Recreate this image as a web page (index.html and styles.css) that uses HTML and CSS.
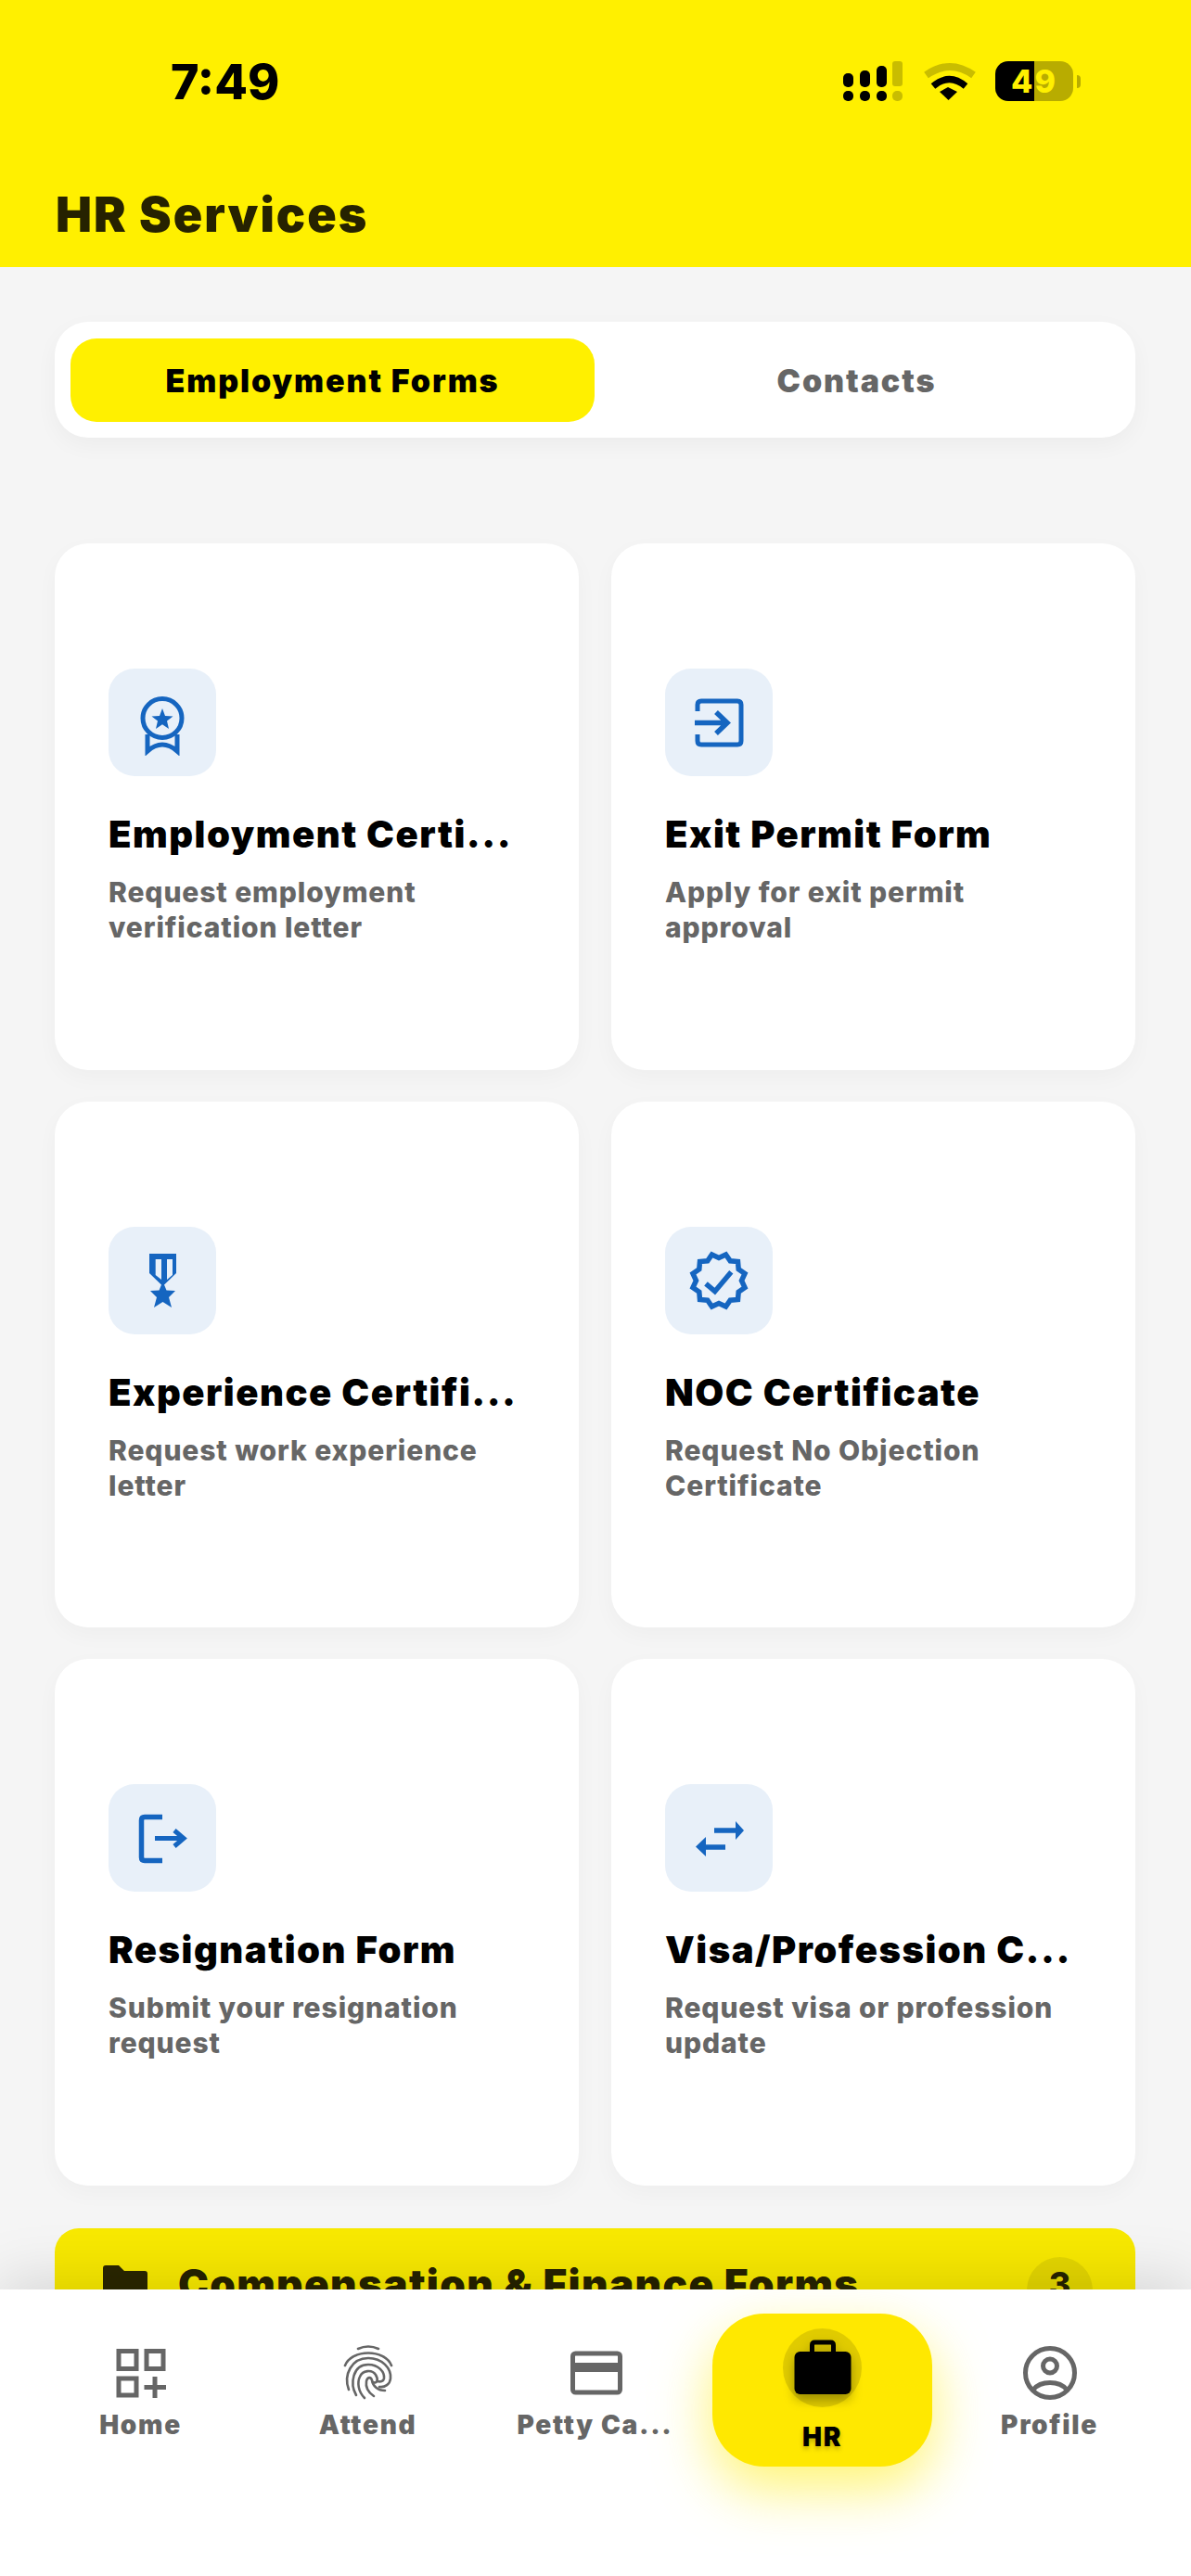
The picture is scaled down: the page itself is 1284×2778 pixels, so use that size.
FILE: index.html
```html
<!DOCTYPE html>
<html lang="en">
<head>
    <meta charset="UTF-8">
    <meta name="viewport" content="width=device-width, initial-scale=1.0">
    <title>HR Services</title>
    <link rel="stylesheet" href="styles.css">
</head>
<body>
    <div class="page">
        <header class="header">
            <div class="status">
                <span class="time">7:49</span>
                <div class="status-icons">
                    <svg class="signal" width="64" height="43" viewBox="0 0 64 43">
                        <g fill="#000">
                            <rect x="0" y="13" width="11" height="15" rx="5"/>
                            <rect x="18" y="10" width="11" height="18" rx="5"/>
                            <rect x="36" y="5" width="11" height="23" rx="5"/>
                            <rect x="0" y="32" width="11" height="11" rx="5"/>
                            <rect x="18" y="32" width="11" height="11" rx="5"/>
                            <rect x="36" y="32" width="11" height="11" rx="5"/>
                        </g>
                        <g fill="#C9BD00">
                            <rect x="53" y="0" width="11" height="27" rx="3"/>
                            <rect x="53" y="32" width="11" height="11" rx="5"/>
                        </g>
                    </svg>
                    <svg class="wifi" width="58" height="43" viewBox="0 0 58 43">
                        <path d="M3.5 15 Q29 -3 54.5 15" fill="none" stroke="#C9BD00" stroke-width="8"/>
                        <path d="M11 27 Q28.5 12 46 27" fill="none" stroke="#000" stroke-width="7"/>
                        <path d="M18 33 L27 28 L37 33 L27.500 42 Z" fill="#000"/>
                    </svg>
                    <div class="battery">
                        <div class="battery-body">49</div>
                        <span class="battery-nub"></span>
                    </div>
                </div>
            </div>
            <h1>HR Services</h1>
        </header>

        <main class="content">
            <div class="tabs">
                <button class="tab active">Employment Forms</button>
                <button class="tab">Contacts</button>
            </div>

            <div class="cards">
                <div class="card">
                    <div class="card-icon">
                        <svg width="72" height="72" viewBox="0 0 72 72">
                            <circle cx="36" cy="31.500" r="21" fill="none" stroke="#1565C0" stroke-width="5"/>
                            <path d="M36 21 L39 29 L47.500 29.500 L41 34.500 L43 43 L36 38.300 L29 43 L31 34.500 L24.500 29.500 L33 29 Z" fill="#1565C0"/>
                            <path d="M20 49 V67 Q28 60 36 60 Q44 60 52 67 V49" fill="none" stroke="#1565C0" stroke-width="5"/>
                        </svg>
                    </div>
                    <h2>Employment Certi...</h2>
                    <p>Request employment verification letter</p>
                </div>
                <div class="card">
                    <div class="card-icon">
                        <svg width="72" height="72" viewBox="0 0 72 72">
                            <path d="M13 24 V17 Q13 13 17 13 H56 Q60 13 60 17 V56 Q60 60 56 60 H17 Q13 60 13 56 V49" fill="none" stroke="#1565C0" stroke-width="5"/>
                            <path d="M10 36.500 H44 M33 25 L45 36.500 L33 48" fill="none" stroke="#1565C0" stroke-width="5.500"/>
                        </svg>
                    </div>
                    <h2>Exit Permit Form</h2>
                    <p>Apply for exit permit approval</p>
                </div>
                <div class="card">
                    <div class="card-icon">
                        <svg width="72" height="72" viewBox="0 0 72 72">
                            <path fill-rule="evenodd" fill="#1565C0" d="M22 7 H51 V28 L36.500 42 L22 28 Z M28.700 13 V30 L35 35 V13 Z M41 13 V35 L47 30 V13 Z"/>
                            <path fill="#1565C0" d="M36.500 37 L40.500 46.500 L50 47 L43 54 L46 65 L36.500 59 L27 65 L30 54 L23 47 L32.500 46.500 Z"/>
                        </svg>
                    </div>
                    <h2>Experience Certifi...</h2>
                    <p>Request work experience letter</p>
                </div>
                <div class="card">
                    <div class="card-icon">
                        <svg width="72" height="72" viewBox="0 0 72 72">
                            <path d="M60.500 36 L64 43.500 L57.200 48.250 L56.500 56.500 L48.250 57.200 L43.500 64 L36 60.500 L28.500 64 L23.750 57.200 L15.500 56.500 L14.800 48.250 L8 43.500 L11.500 36 L8 28.500 L14.800 23.750 L15.500 15.500 L23.750 14.800 L28.500 8 L36 11.500 L43.500 8 L48.250 14.800 L56.500 15.500 L57.200 23.750 L64 28.500 Z" fill="none" stroke="#1565C0" stroke-width="5.500" stroke-linejoin="miter"/>
                            <path d="M22 39.300 L31.700 47.700 L49.300 26.700" fill="none" stroke="#1565C0" stroke-width="5.500"/>
                        </svg>
                    </div>
                    <h2>NOC Certificate</h2>
                    <p>Request No Objection Certificate</p>
                </div>
                <div class="card">
                    <div class="card-icon">
                        <svg width="72" height="72" viewBox="0 0 72 72">
                            <path d="M36 13.500 H17 Q13.500 13.500 13.500 17 V57 Q13.500 60.500 17 60.500 H36" fill="none" stroke="#1565C0" stroke-width="5.500"/>
                            <path d="M28 36.500 H59 M49 28 L59 36.500 L49 45" fill="none" stroke="#1565C0" stroke-width="5"/>
                        </svg>
                    </div>
                    <h2>Resignation Form</h2>
                    <p>Submit your resignation request</p>
                </div>
                <div class="card">
                    <div class="card-icon">
                        <svg width="72" height="72" viewBox="0 0 72 72">
                            <path d="M31 28 H56 M43 46 H20" fill="none" stroke="#1565C0" stroke-width="5.500"/>
                            <path d="M54 18 L63 28 L54 38 Z M22 35 L11 45.500 L22 56 Z" fill="#1565C0"/>
                        </svg>
                    </div>
                    <h2>Visa/Profession C...</h2>
                    <p>Request visa or profession update</p>
                </div>
            </div>

            <section class="group">
                <svg class="folder" width="48" height="40" viewBox="0 0 48 40">
                    <path d="M0 3 Q0 0 3 0 H17 L23 6 H45 Q48 6 48 9 V37 Q48 40 45 40 H3 Q0 40 0 37 Z" fill="#2A2600"/>
                </svg>
                <h3>Compensation &amp; Finance Forms</h3>
                <span class="count">3</span>
            </section>
        </main>

        <nav class="nav">
            <div class="nav-item">
                <svg width="64" height="64" viewBox="0 0 64 64" fill="none" stroke="#666" stroke-width="5">
                    <rect x="8" y="8.500" width="19" height="19"/>
                    <rect x="38" y="8.500" width="18" height="19"/>
                    <rect x="8" y="38" width="19" height="18"/>
                    <path d="M47 36 V59 M35.500 47.500 H59"/>
                </svg>
                <span>Home</span>
            </div>
            <div class="nav-item">
                <svg width="64" height="64" viewBox="0 0 64 64" fill="none" stroke="#666" stroke-width="2.600" stroke-linecap="round">
                    <path d="M21 6 Q32 1 43 6"/>
                    <path d="M7 24 C14 6 50 6 57 24"/>
                    <path d="M11 50 C5 34 14 16 32 16 C47 16 57 27 56 38 C55.500 44 50 48 44 47"/>
                    <path d="M19 56 C12 44 15 23 32 23 C43 23 50 31 49 38 C48.500 41 45 42 42 41"/>
                    <path d="M28 59 C21 52 20 42 23 36 C26 29 36 28 40 34 C43 39 42 44 37 42"/>
                    <path d="M38 57 C32 53 29 47 30 41 C31 36 35 36 36 40 C37 46 42 51 50 51"/>
                </svg>
                <span>Attend</span>
            </div>
            <div class="nav-item">
                <svg width="64" height="64" viewBox="0 0 64 64" fill="none" stroke="#666" stroke-width="5">
                    <rect x="7.500" y="11" width="51" height="42" rx="3"/>
                    <path d="M7 26 H59" stroke-width="10"/>
                </svg>
                <span>Petty Ca...</span>
            </div>
            <div class="nav-item active">
                <div class="nav-bubble">
                    <svg width="62" height="60" viewBox="0 0 62 60">
                        <path d="M19.500 13 V6 Q19.500 3 22.500 3 H39.500 Q42.500 3 42.500 6 V13" fill="none" stroke="#000" stroke-width="5"/>
                        <rect x="0.500" y="13" width="61" height="46" rx="6" fill="#000"/>
                    </svg>
                </div>
                <span>HR</span>
            </div>
            <div class="nav-item">
                <svg width="64" height="64" viewBox="0 0 64 64" fill="none" stroke="#666" stroke-width="5">
                    <circle cx="32" cy="32" r="26.500"/>
                    <circle cx="32" cy="24.500" r="7.500"/>
                    <path d="M14 50 C18 45 25 42.500 32 42.500 C39 42.500 46 45 50 50"/>
                </svg>
                <span>Profile</span>
            </div>
        </nav>
    </div>
</body>
</html>
```

FILE: styles.css
```css
* {
    box-sizing: border-box;
}
body {
    margin: 0;
    font-family: Inter, "Liberation Sans", sans-serif;
    background-color: #f5f5f5;
}
.page {
    width: 1284px;
    height: 2778px;
    display: flex;
    flex-direction: column;
    overflow: hidden;
}

/* header */
.header {
    height: 288px;
    flex-shrink: 0;
    background-color: #fff000;
    padding-top: 66px;
}
.status {
    height: 43px;
    display: flex;
    align-items: center;
    justify-content: space-between;
    padding: 0 119px 0 184px;
}
.time {
    margin-top: 2px;
    font-size: 52px;
    font-weight: 800;
    color: #000;
}
.status-icons {
    display: flex;
    align-items: center;
}
.wifi {
    margin-left: 22px;
}
.battery {
    margin-left: 20px;
    display: flex;
    align-items: center;
}
.battery-body {
    width: 84px;
    height: 43px;
    border-radius: 14px;
    background: linear-gradient(90deg, #000 0, #000 50%, #b8ac00 50%, #b8ac00 100%);
    color: #fff000;
    font-size: 34px;
    font-weight: 800;
    line-height: 43px;
    letter-spacing: 2px;
    text-align: center;
}
.battery-nub {
    width: 4px;
    height: 14px;
    margin-left: 4px;
    border-radius: 0 4px 4px 0;
    background-color: #b8ac00;
}
h1 {
    margin: 93px 0 0 60px;
    font-size: 52px;
    line-height: 60px;
    font-weight: 900;
    letter-spacing: 2px;
    color: #262200;
}

/* content */
.content {
    flex: 1;
    min-height: 0;
    overflow: hidden;
    padding: 59px 60px 0 59px;
}
.tabs {
    height: 125px;
    display: flex;
    padding: 18px 18px 17px 17px;
    background-color: #fff;
    border-radius: 36px;
    box-shadow: 0 8px 24px rgba(0, 0, 0, 0.04);
}
.tab {
    flex: 1;
    border: none;
    background: none;
    border-radius: 28px;
    font-family: inherit;
    font-size: 34px;
    font-weight: 900;
    letter-spacing: 1.9px;
    color: #666;
}
.tab.active {
    background-color: #fff000;
    color: #000;
}
.cards {
    display: grid;
    grid-template-columns: 1fr 1fr;
    gap: 34px 35px;
    margin-top: 114px;
}
.card {
    height: 567.5px;
    padding: 135px 50px 0 58px;
    background-color: #fff;
    border-radius: 36px;
    box-shadow: 0 8px 24px rgba(0, 0, 0, 0.03);
}
.card-icon {
    width: 116px;
    height: 116px;
    display: flex;
    align-items: center;
    justify-content: center;
    background-color: #e8f0f9;
    border-radius: 28px;
}
.card h2 {
    margin: 36px 0 0;
    font-size: 40px;
    line-height: 54px;
    font-weight: 900;
    letter-spacing: 1.5px;
    color: #000;
    white-space: nowrap;
}
.card p {
    margin: 16px 0 0;
    font-size: 30px;
    line-height: 38px;
    font-weight: 800;
    letter-spacing: 0.9px;
    color: #666;
}
.group {
    height: 200px;
    margin-top: 46px;
    display: flex;
    align-items: flex-start;
    padding: 31px 46px 0 52px;
    background-color: #f8e900;
    border-radius: 26px;
}
.folder {
    margin-top: 9px;
}
.group h3 {
    flex: 1;
    margin: 5px 0 0 33px;
    font-size: 44px;
    line-height: 48px;
    font-weight: 900;
    letter-spacing: 1.4px;
    color: #262200;
}
.count {
    width: 71px;
    height: 71px;
    border-radius: 50%;
    background-color: rgba(0, 0, 0, 0.08);
    font-size: 36px;
    line-height: 58px;
    font-weight: 800;
    color: #262200;
    text-align: center;
}

/* bottom nav */
.nav {
    position: relative;
    height: 309px;
    flex-shrink: 0;
    display: flex;
    gap: 8px;
    padding: 26px 34px 0 33px;
    background-color: #fff;
    box-shadow: 0 -10px 60px rgba(0, 0, 0, 0.13);
}
.nav-item {
    flex: 1;
    height: 165px;
    display: flex;
    flex-direction: column;
    align-items: center;
    justify-content: center;
    gap: 7px;
    padding-top: 3px;
    font-size: 28px;
    line-height: 34px;
    font-weight: 900;
    letter-spacing: 1.7px;
    color: #666;
    white-space: nowrap;
}
.nav-item.active {
    gap: 15px;
    padding-top: 0;
    background-color: #ffe800;
    border-radius: 56px;
    color: #000;
    box-shadow: 0 24px 60px rgba(255, 235, 0, 0.55);
}
.nav-item.active span {
    text-shadow: 0 3px 5px rgba(0, 0, 0, 0.25);
}
.nav-bubble {
    width: 85px;
    height: 85px;
    display: flex;
    align-items: center;
    justify-content: center;
    border-radius: 50%;
    background-color: rgba(0, 0, 0, 0.12);
}
.nav-bubble svg {
    filter: drop-shadow(0 6px 6px rgba(0, 0, 0, 0.3));
}
```
